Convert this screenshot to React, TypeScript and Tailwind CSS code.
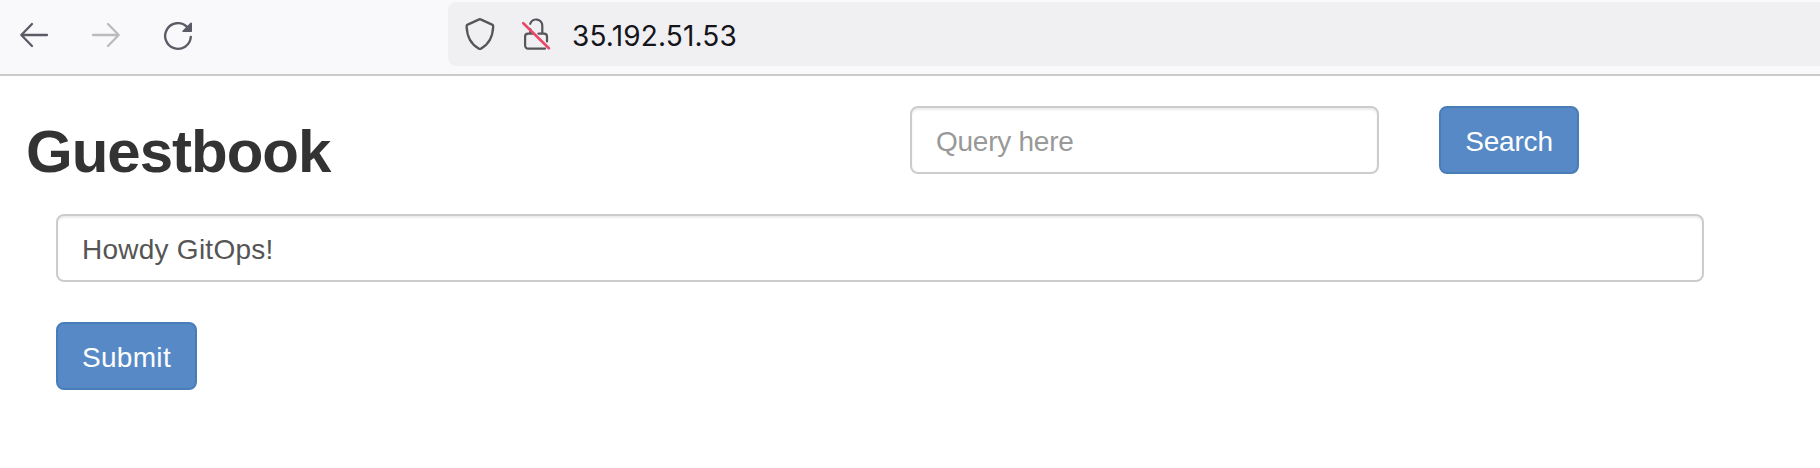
function BackIcon() {
  return (
    <svg className="h-8 w-8" viewBox="0 0 32 32" fill="none" stroke="#5b5b66" strokeWidth="2.3" strokeLinecap="round" strokeLinejoin="round">
      <path d="M29 16H3.300M14 5L3.300 16l10.700 11" />
    </svg>
  );
}

function ForwardIcon() {
  return (
    <svg className="h-8 w-8" viewBox="0 0 32 32" fill="none" stroke="#bbbbbe" strokeWidth="2.3" strokeLinecap="round" strokeLinejoin="round">
      <path d="M3 16h25.700M18 5l10.700 11-10.700 11" />
    </svg>
  );
}

function ReloadIcon() {
  return (
    <svg className="h-8 w-8" viewBox="0 0 32 32" fill="none">
      <path d="M28.800 18A12.850 12.850 0 1 1 25 7.800" stroke="#5b5b66" strokeWidth="2.4" strokeLinecap="round" />
      <path d="M30 4.300v7.900a.8.8 0 0 1-.8.800h-7.900c-.9 0-1.300-1-.6-1.600l7.800-7.700c.6-.6 1.500-.2 1.500.6z" fill="#5b5b66" />
    </svg>
  );
}

function ShieldIcon() {
  return (
    <svg className="h-8 w-8" viewBox="0 0 32 32" fill="none" stroke="#55555a" strokeWidth="2.300" strokeLinejoin="round">
      <path d="M15.200 1.400a2 2 0 0 1 1.400 0L28.100 6.600a2 2 0 0 1 1.100 1.900C28.800 19 25.500 26 16.800 30.700a1.900 1.900 0 0 1-1.800 0C6.300 26 3 19 2.600 8.500a2 2 0 0 1 1.100-1.900z" />
    </svg>
  );
}

function InsecureLockIcon() {
  return (
    <svg className="h-8 w-8" viewBox="0 0 32 32" fill="none" strokeLinecap="round">
      <path d="M10.200 5.800A6.200 6.200 0 0 1 22.300 7.500v8.200M18.500 15.700H24a3 3 0 0 1 3 3V23.500M10.300 15.700H8.100a3 3 0 0 0-3 3v8.900a3 3 0 0 0 3 3h17M10.300 11v4.700h3" stroke="#55555a" strokeWidth="2.200" />
      <path d="M3.300 5.200L28.900 30.300" stroke="#ea4868" strokeWidth="2.600" />
    </svg>
  );
}

export default function App() {
  return (
    <div className="h-[468px] w-full overflow-hidden bg-white font-['Liberation_Sans',Arial,sans-serif] text-[28px] leading-[40px]">
      <header className="flex h-[76px] border-b-2 border-[#cacaca] bg-[#f9f9fb]">
        <nav className="flex w-[448px] shrink-0 gap-10 pt-[19px] pl-[18px]">
          <button aria-label="Back" className="h-8"><BackIcon /></button>
          <button aria-label="Forward" className="h-8"><ForwardIcon /></button>
          <button aria-label="Reload" className="h-8"><ReloadIcon /></button>
        </nav>
        <div className="mt-[2px] flex h-16 flex-1 items-center rounded-l-lg bg-[#f0f0f3] pl-4">
          <ShieldIcon />
          <div className="ml-6"><InsecureLockIcon /></div>
          <span className="ml-[20px] pt-[3px] font-['Inter',sans-serif] tracking-[0.15px] text-[#15141a]">35.192.51.53</span>
        </div>
      </header>
      <main>
        <div className="flex h-[98px] items-end">
          <h2 className="w-[883px] pl-[26px] text-[60px] leading-[66px] font-bold tracking-[-1px] text-[#333]">
            <span className="relative top-[11px]">Guestbook</span>
          </h2>
          <input
            placeholder="Query here"
            className="ml-[27px] h-[68px] w-[469px] rounded-lg border-2 border-[#ccc] px-6 pt-[3px] tracking-[-0.25px] text-[#555] shadow-[inset_0_2px_2px_rgba(0,0,0,0.075)] outline-none placeholder:text-[#999]"
          />
          <button className="ml-[60px] h-[68px] w-[140px] rounded-lg border-2 border-[#487db9] bg-[#5689c5] pt-[3px] tracking-[-0.2px] text-white">Search</button>
        </div>
        <div className="flex flex-col items-start gap-10 pt-10 pl-14">
          <input
            defaultValue="Howdy GitOps!"
            className="h-[68px] w-[1648px] rounded-lg border-2 border-[#ccc] px-6 pt-[3px] tracking-[0.25px] text-[#555] shadow-[inset_0_2px_2px_rgba(0,0,0,0.075)] outline-none"
          />
          <button className="h-[68px] w-[141px] rounded-lg border-2 border-[#487db9] bg-[#5689c5] pt-[3px] tracking-[0.3px] text-white">Submit</button>
        </div>
      </main>
    </div>
  );
}
